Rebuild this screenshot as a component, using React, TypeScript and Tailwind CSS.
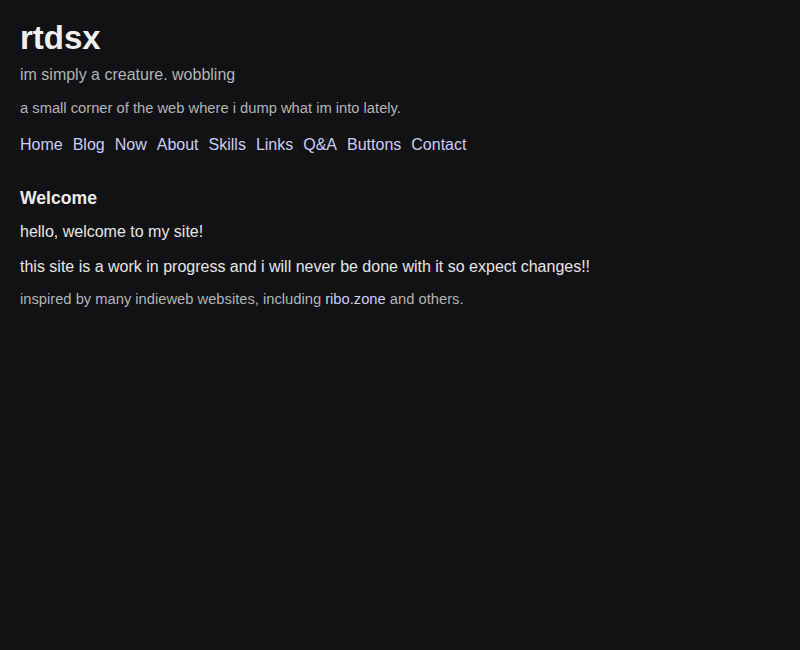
const links = ["Home", "Blog", "Now", "About", "Skills", "Links", "Q&A", "Buttons", "Contact"];

export default function App() {
  return (
    <div className="min-h-[650px] bg-[#111214] px-5 pt-[17px] pb-4 font-['Liberation_Sans',Arial,sans-serif] text-[#e6e6e6]">
      <header>
        <h1 className="text-[33px] font-bold leading-[42px] text-[#f0f0f0]">rtdsx</h1>
        <p className="mt-1 text-base leading-6 text-[#b4b4b4]">im simply a creature. wobbling</p>
        <p className="mt-[10px] text-[14.72px] leading-[22px] text-[#b4b4b4]">
          a small corner of the web where i dump what im into lately.
        </p>
        <nav className="mt-[14px] flex gap-[10px] text-base leading-6">
          {links.map((l) => (
            <a key={l} href="#" className="text-[#cdcdf5]">
              {l}
            </a>
          ))}
        </nav>
      </header>
      <main className="mt-[28px]">
        <h2 className="text-[17.6px] font-bold leading-[26px] text-[#ececec]">Welcome</h2>
        <p className="mt-[9px] text-base leading-6">hello, welcome to my site!</p>
        <p className="mt-[11px] text-base leading-6">
          this site is a work in progress and i will never be done with it so expect changes!!
        </p>
        <p className="mt-[9px] text-[14.72px] leading-[22px] text-[#b4b4b4]">
          inspired by many indieweb websites, including{" "}
          <a href="#" className="text-[#cdcdf5]">
            ribo.zone
          </a>{" "}
          and others.
        </p>
      </main>
    </div>
  );
}
